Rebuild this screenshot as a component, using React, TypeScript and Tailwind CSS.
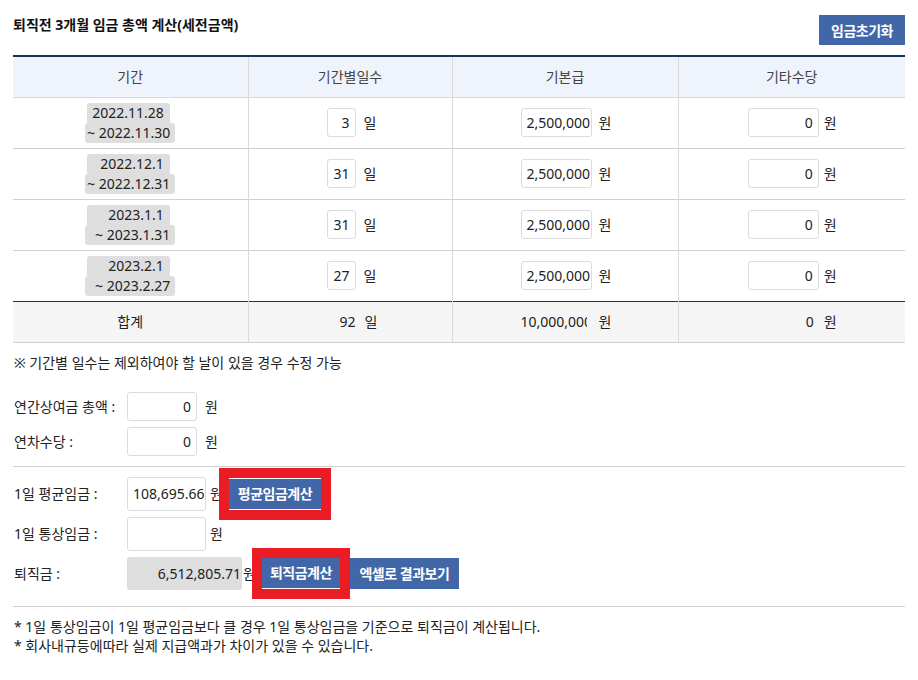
const rows = [
  { from: "2022.11.28", to: "~ 2022.11.30", days: 3 },
  { from: "2022.12.1", to: "~ 2022.12.31", days: 31 },
  { from: "2023.1.1", to: "~ 2023.1.31", days: 31 },
  { from: "2023.2.1", to: "~ 2023.2.27", days: 27 },
];

const inputBox =
  "h-[29px] rounded-[3px] border border-[#dcdcdc] bg-white px-[5px] text-right text-[14px] leading-[27px] text-[#222]";

function Btn({ children, className = "" }: { children: React.ReactNode; className?: string }) {
  return (
    <button
      className={
        "whitespace-nowrap bg-[#4267a8] px-0 text-[14px] font-bold tracking-[-0.5px] text-white " + className
      }
    >
      {children}
    </button>
  );
}

function Row({ label, children }: { label: string; children: React.ReactNode }) {
  return (
    <div className="flex items-center">
      <span className="w-[113px] shrink-0">{label}</span>
      {children}
    </div>
  );
}

export default function App() {
  return (
    <div
      className="min-h-[680px] w-[918px] bg-white px-[13px] text-[14px] text-[#222]"
      style={{ fontFamily: '"Noto Sans", "Noto Sans CJK KR", sans-serif' }}
    >
      <div className="flex h-[55px] items-start justify-between">
        <h1 className="pt-[14px] text-[14px] font-bold text-[#111]">
          퇴직전 3개월 임금 총액 계산(세전금액)
        </h1>
        <Btn className="mt-[15px] h-[30px] w-[86px]">임금초기화</Btn>
      </div>

      <table className="w-[892px] table-fixed border-collapse border-t-2 border-[#0e3763] text-center">
        <colgroup>
          <col className="w-[235px]" />
          <col className="w-[204px]" />
          <col className="w-[226px]" />
          <col className="w-[227px]" />
        </colgroup>
        <thead>
          <tr className="h-[41px] bg-[#eff3fb] text-[#444]">
            {["기간", "기간별일수", "기본급", "기타수당"].map((h, i) => (
              <th
                key={h}
                className={
                  "border-b border-[#d9d9d9] font-normal " +
                  (i > 0 ? "border-l border-l-[#d9d9d9]" : "")
                }
              >
                {h}
              </th>
            ))}
          </tr>
        </thead>
        <tbody>
          {rows.map((r, i) => (
            <tr
              key={r.from}
              className={
                "h-[51px] " +
                (i === rows.length - 1 ? "border-b border-[#0e3763]" : "border-b border-[#d0d0d0]")
              }
            >
              <td>
                <div className="flex flex-col items-center leading-[20px]">
                  <span className="w-[83px] translate-x-[-2px] rounded-t-[3px] bg-[#dedede] pr-[6px] text-right">
                    {r.from}
                  </span>
                  <span className="w-[90px] rounded-[3px] bg-[#dedede] pr-[5px] text-right">
                    {r.to}
                  </span>
                </div>
              </td>
              <td className="border-l border-[#d9d9d9]">
                <div className="flex items-center justify-center pl-[3px]">
                  <span className={inputBox + " w-[29px]"}>{r.days}</span>
                  <span className="ml-[8px]">일</span>
                </div>
              </td>
              <td className="border-l border-[#d9d9d9]">
                <div className="flex items-center justify-center pl-[2px]">
                  <span className={inputBox + " w-[71px] px-[3px]"}>2,500,000</span>
                  <span className="ml-[7px]">원</span>
                </div>
              </td>
              <td className="border-l border-[#d9d9d9]">
                <div className="flex items-center justify-center pl-[1px]">
                  <span className={inputBox + " w-[71px]"}>0</span>
                  <span className="ml-[5px]">원</span>
                </div>
              </td>
            </tr>
          ))}
          <tr className="h-[41px] border-b border-[#d0d0d0] bg-[#f5f5f5]">
            <td>합계</td>
            <td className="border-l border-[#d9d9d9]">
              <div className="flex items-center justify-center pl-[4px]">
                <span className="w-[29px] text-right">92</span>
                <span className="ml-[9px]">일</span>
              </div>
            </td>
            <td className="border-l border-[#d9d9d9]">
              <div className="flex items-center justify-center pl-[2px]">
                <span className="w-[66px] overflow-hidden whitespace-nowrap text-left">10,000,000</span>
                <span className="ml-[12px]">원</span>
              </div>
            </td>
            <td className="border-l border-[#d9d9d9]">
              <div className="flex items-center justify-center pl-[1px]">
                <span className="w-[71px] px-[5px] text-right">0</span>
                <span className="ml-[5px]">원</span>
              </div>
            </td>
          </tr>
        </tbody>
      </table>

      <p className="mt-[9px] pl-[1px]">※ 기간별 일수는 제외하여야 할 날이 있을 경우 수정 가능</p>

      <div className="mt-[19px] flex flex-col gap-[6px] pl-[1px]">
        <Row label="연간상여금 총액 :">
          <span className={inputBox + " w-[70px]"}>0</span>
          <span className="ml-[8px]">원</span>
        </Row>
        <Row label="연차수당 :">
          <span className={inputBox + " w-[70px]"}>0</span>
          <span className="ml-[8px]">원</span>
        </Row>
      </div>

      <div className="mt-[10px] border-t border-[#d0d0d0]" />

      <div className="flex flex-col pl-[1px] pt-[1px]">
        <Row label="1일 평균임금 :">
          <span className={inputBox + " h-[34px] w-[79px] px-[3px] leading-[32px]"}>108,695.66</span>
          <span className="ml-[4px]">원</span>
          <div className="relative ml-[-4px] border-[10px] border-[#ec1c24]">
            <Btn className="block h-[32px] w-[92px] border-y border-white">평균임금계산</Btn>
          </div>
        </Row>
        <div className="mt-[-3px]">
          <Row label="1일 통상임금 :">
            <span className={inputBox + " h-[34px] w-[79px]"}></span>
            <span className="ml-[4px]">원</span>
          </Row>
        </div>
        <div className="mt-[-3px]">
          <Row label="퇴직금 :">
            <span className="h-[33px] w-[115px] rounded-[3px] bg-[#dedede] pr-[1px] text-right leading-[33px]">
              6,512,805.71
            </span>
            <span className="ml-[1px]">원</span>
            <div className="ml-[-4px] border-[10px] border-[#ec1c24]">
              <Btn className="block h-[31px] w-[78px] border-b border-white">퇴직금계산</Btn>
            </div>
            <Btn className="h-[31px] w-[109px]">엑셀로 결과보기</Btn>
          </Row>
        </div>
      </div>

      <div className="mt-[7px] border-t border-[#d0d0d0]" />

      <div className="pt-[10px] pl-[1px] leading-[19px]">
        <p>* 1일 통상임금이 1일 평균임금보다 클 경우 1일 통상임금을 기준으로 퇴직금이 계산됩니다.</p>
        <p>* 회사내규등에따라 실제 지급액과가 차이가 있을 수 있습니다.</p>
      </div>
    </div>
  );
}
